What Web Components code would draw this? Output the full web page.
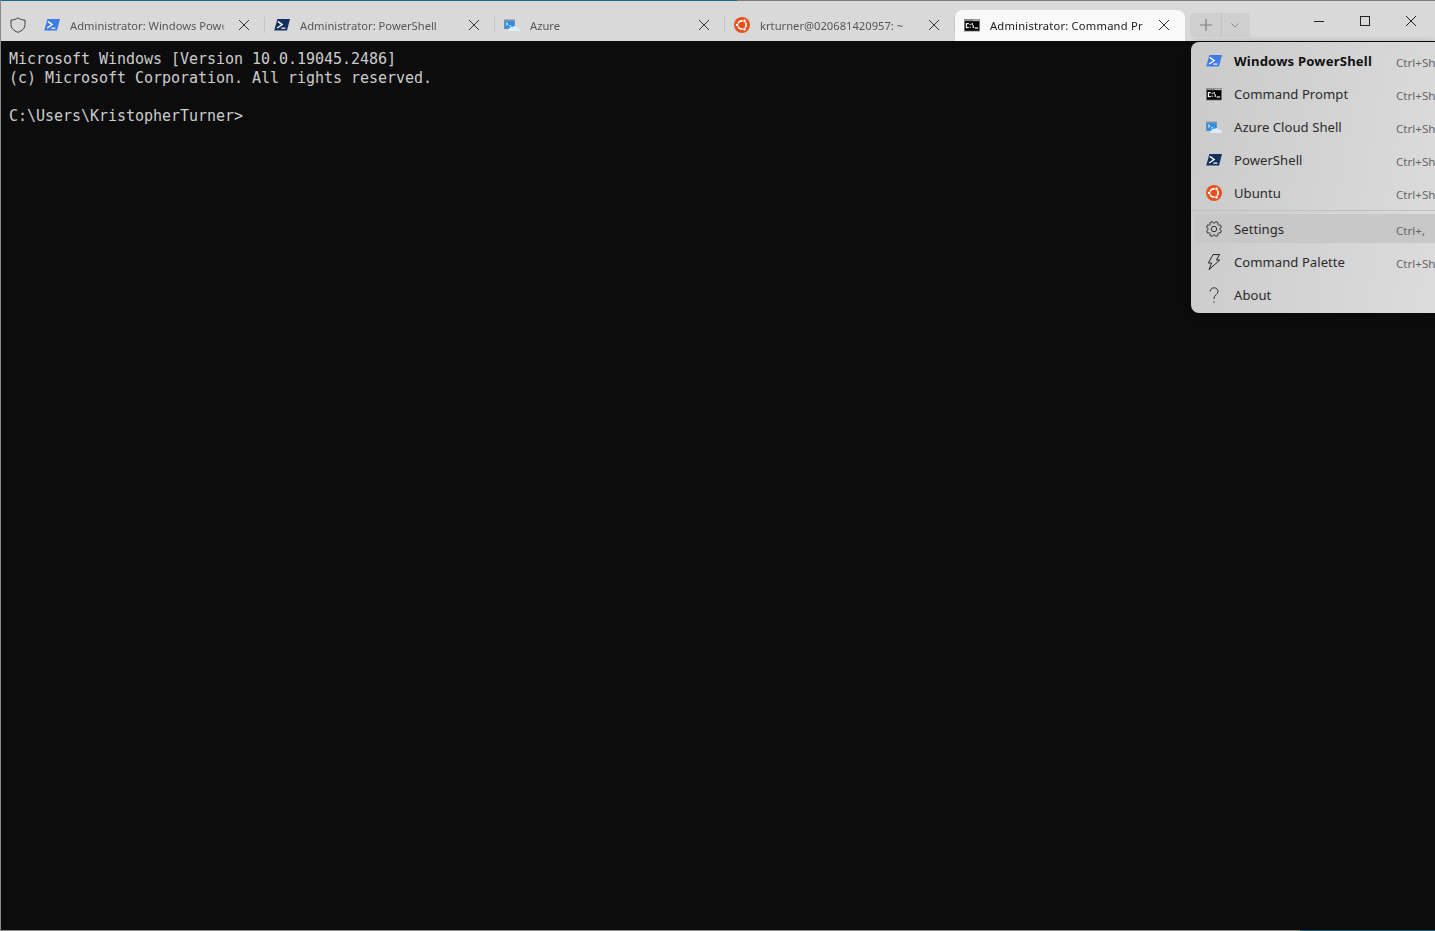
<!DOCTYPE html>
<html lang="en">
<head>
<meta charset="utf-8">
<title>Windows Terminal</title>
<style>
    html, body { margin: 0; height: 100%; overflow: hidden; background: #0c0c0c; }
</style>
</head>
<body>
<wt-window>
    <wt-tab-bar slot="tabs">
        <wt-tab icon="powershell" label="Administrator: Windows Powe"></wt-tab>
        <wt-tab icon="powershell-dark" label="Administrator: PowerShell"></wt-tab>
        <wt-tab icon="azure" label="Azure"></wt-tab>
        <wt-tab icon="ubuntu" label="krturner@020681420957: ~"></wt-tab>
        <wt-tab icon="cmd" label="Administrator: Command Pr" active></wt-tab>
    </wt-tab-bar>
    <wt-terminal slot="body">Microsoft Windows [Version 10.0.19045.2486]
(c) Microsoft Corporation. All rights reserved.

C:\Users\KristopherTurner&gt;</wt-terminal>
    <wt-menu slot="overlay">
        <wt-menu-item icon="powershell" keys="Ctrl+Sh" default>Windows PowerShell</wt-menu-item>
        <wt-menu-item icon="cmd" keys="Ctrl+Sh">Command Prompt</wt-menu-item>
        <wt-menu-item icon="azure" keys="Ctrl+Sh">Azure Cloud Shell</wt-menu-item>
        <wt-menu-item icon="powershell-dark" keys="Ctrl+Sh">PowerShell</wt-menu-item>
        <wt-menu-item icon="ubuntu" keys="Ctrl+Sh">Ubuntu</wt-menu-item>
        <wt-menu-sep></wt-menu-sep>
        <wt-menu-item icon="gear" keys="Ctrl+," hover>Settings</wt-menu-item>
        <wt-menu-item icon="bolt" keys="Ctrl+Sh">Command Palette</wt-menu-item>
        <wt-menu-item icon="help">About</wt-menu-item>
    </wt-menu>
</wt-window>

<script>
const UI_FONT = '"Noto Sans", "Open Sans", sans-serif';

// gear outline with 8 teeth, drawn around 8,8
function gearPath() {
    let d = '';
    for (let i = 0; i < 8; i++) {
        const a = i * Math.PI / 4 + Math.PI / 8;
        const pts = [[-0.30, 5.9], [-0.17, 7.6], [0.17, 7.6], [0.30, 5.9]];
        pts.forEach(([o, r], j) => {
            const x = 8 + r * Math.cos(a + o);
            const y = 8 + r * Math.sin(a + o);
            d += (i === 0 && j === 0 ? 'M' : 'L') + x.toFixed(2) + ' ' + y.toFixed(2);
        });
    }
    return d + 'Z';
}

const ICONS = {
    powershell: `<path d="M3.4 2H16l-3 11.6H0.2z" fill="#3f7ce6"/><path d="M3.8 4.4l4.4 3.2L3.2 11" fill="none" stroke="#fff" stroke-width="1.3"/><path d="M7.4 11.2h4" stroke="#fff" stroke-width="1.2"/>`,
    'powershell-dark': `<path d="M3.4 2H16l-3 11.6H0.2z" fill="#12315e"/><path d="M3.8 4.4l4.4 3.2L3.2 11" fill="none" stroke="#fff" stroke-width="1.3"/><path d="M7.4 11.2h4" stroke="#fff" stroke-width="1.2"/>`,
    cmd: `<rect x="0" y="2" width="16" height="12.5" fill="#8a8a8a"/><rect x="0.8" y="4.2" width="14.4" height="9.5" fill="#000"/><rect x="9.500" y="2.800" width="1.200" height="1" fill="#e8e8e8"/><rect x="11.500" y="2.800" width="1.200" height="1" fill="#e8e8e8"/><rect x="13.500" y="2.800" width="1.200" height="1" fill="#e8e8e8"/><g fill="#f4f4f4"><rect x="1.800" y="6" width="3" height="1.200"/><rect x="1.800" y="7" width="1.300" height="3.400"/><rect x="1.800" y="10" width="3" height="1.200"/><rect x="5.600" y="6.800" width="1.200" height="1.200"/><rect x="5.600" y="9.600" width="1.200" height="1.200"/><rect x="7.600" y="6" width="1.200" height="2.200"/><rect x="8.600" y="8.200" width="1.200" height="2.800"/><rect x="10.600" y="10.400" width="3.600" height="1.200"/></g>`,
    azure: `<rect x="0" y="2.500" width="11" height="9.500" fill="#7f93a6"/><rect x="0.700" y="4.400" width="9.600" height="7" fill="#2f8fe6"/><path d="M2 5.800l2 1.300-2 1.300" fill="none" stroke="#fff" stroke-width="0.900"/><path d="M5 8.800h2.400" stroke="#fff" stroke-width="0.800"/><path d="M5.600 14c-1.500 0-2-1.900-.4-2.300.3-1.400 1.900-2.200 3.400-1.800 1-1.500 3.600-1 3.800.800 1.800.1 3.600.7 3.600 2 0 .9-.7 1.300-1.800 1.300z" fill="#d8eefb"/>`,
    ubuntu: `<circle cx="8" cy="8" r="8" fill="#e4531f"/><circle cx="8" cy="8" r="4.100" fill="none" stroke="#fff" stroke-width="1.700"/><g fill="#fff" stroke="#e4531f" stroke-width="0.800"><circle cx="3.100" cy="8" r="1.700"/><circle cx="10.500" cy="3.700" r="1.700"/><circle cx="10.500" cy="12.300" r="1.700"/></g>`,
    gear: `<path d="${gearPath()}" fill="none" stroke="#333" stroke-width="1"/><circle cx="8" cy="8" r="2.700" fill="none" stroke="#333" stroke-width="1"/>`,
    bolt: `<path d="M7 0.600h6.600L10.400 6h3.400L3 15.600 5.600 9H2.400z" fill="none" stroke="#222" stroke-width="1" stroke-linejoin="round"/>`,
    help: `<path d="M4 4.600C4.200 2.200 6 .8 8 .8c2.300 0 4 1.500 4 3.500 0 3.200-4 3.600-4 7v.8" fill="none" stroke="#333" stroke-width="1"/><circle cx="8" cy="15" r="0.700" fill="#333"/>`,
    shield: `<path d="M8 0.800c1.900 1.500 4.300 2.200 7 2.300v4.400c0 3.600-2.600 6.300-7 7.800-4.400-1.500-7-4.200-7-7.800V3.100C3.700 3 6.100 2.300 8 0.800z" fill="none" stroke="#3c3c3c" stroke-width="1"/>`,
    close: `<path d="M3 3l10 10M13 3L3 13" fill="none" stroke="#333" stroke-width="1"/>`
};

function iconSvg(name, size = 16) {
    return `<svg width="${size}" height="${size}" viewBox="0 0 16 16" aria-hidden="true">${ICONS[name] || ''}</svg>`;
}

const windowTmp = document.createElement('template');
windowTmp.innerHTML = `
    <style>
        :host {
            position: relative;
            display: flex;
            flex-direction: column;
            box-sizing: border-box;
            width: 100%;
            height: 100vh;
            overflow: hidden;
            border-left: 1px solid #8a8a8a;
            font-family: ${UI_FONT};
        }
        .edge-top { height: 1px; flex: none; background: linear-gradient(to right, #1b6a8c 736px, #7d7d7d 736px); }
        .edge-bottom { height: 1px; flex: none; background: linear-gradient(to right, #8a8a8a 1299px, #0f5f82 1299px); }
        .body { flex: 1; min-height: 0; display: flex; }
    </style>
    <div class="edge-top"></div>
    <slot name="tabs"></slot>
    <div class="body"><slot name="body"></slot></div>
    <div class="edge-bottom"></div>
    <slot name="overlay"></slot>
`;
customElements.define('wt-window', class WtWindow extends HTMLElement {
    constructor() {
        super();
        this.attachShadow({mode: 'open'});
        this.shadowRoot.appendChild(windowTmp.content.cloneNode(true));
    }
});

const barTmp = document.createElement('template');
barTmp.innerHTML = `
    <style>
        :host {
            display: flex;
            flex: none;
            height: 40px;
            background: #d9d9d9;
        }
        .shield { width: 34px; flex: none; display: flex; justify-content: center; padding: 16px 1px 0 0; box-sizing: border-box; }
        .tabs { display: flex; flex: none; align-items: flex-end; }
        .new-tab {
            flex: none;
            display: flex;
            height: 24px;
            margin: 12px 0 0 5px;
            background: #cfcfcf;
            border-radius: 4px 0 0 4px;
        }
        .new-tab div { display: flex; align-items: center; justify-content: center; }
        .plus { width: 31px; border-right: 1px solid #c2c2c2; }
        .chev { width: 26px; padding-right: 2px; }
        .spacer { flex: 1; }
        .caption { display: flex; flex: none; align-items: flex-start; padding-right: 1px; }
        .caption div { width: 46px; height: 40px; display: flex; justify-content: center; padding-top: 12px; box-sizing: border-box; }
    </style>
    <div class="shield">${iconSvg('shield')}</div>
    <div class="tabs"><slot></slot></div>
    <div class="new-tab">
        <div class="plus"><svg width="14" height="14" viewBox="0 0 14 14"><path d="M7 1v12M1 7h12" stroke="#7d7d7d" stroke-width="1.2"/></svg></div>
        <div class="chev"><svg width="10" height="10" viewBox="0 0 10 10"><path d="M1.5 3.5L5 7l3.5-3.5" fill="none" stroke="#8a8a8a" stroke-width="1"/></svg></div>
    </div>
    <div class="spacer"></div>
    <div class="caption">
        <div><svg width="12" height="16" viewBox="0 0 12 16"><path d="M1 8.500h10" stroke="#222" stroke-width="1"/></svg></div>
        <div><svg width="12" height="16" viewBox="0 0 12 16"><rect x="1.500" y="3.500" width="9" height="9" fill="none" stroke="#222" stroke-width="1"/></svg></div>
        <div><svg width="12" height="16" viewBox="0 0 12 16"><path d="M1 3l10 10M11 3L1 13" fill="none" stroke="#222" stroke-width="1"/></svg></div>
    </div>
`;
customElements.define('wt-tab-bar', class WtTabBar extends HTMLElement {
    constructor() {
        super();
        this.attachShadow({mode: 'open'});
        this.shadowRoot.appendChild(barTmp.content.cloneNode(true));
    }
});

customElements.define('wt-tab', class WtTab extends HTMLElement {
    constructor() {
        super();
        this.attachShadow({mode: 'open'});
    }

    connectedCallback() {
        this.shadowRoot.innerHTML = `
            <style>
                :host {
                    position: relative;
                    display: flex;
                    align-items: center;
                    box-sizing: border-box;
                    width: 230px;
                    height: 31px;
                    padding: 0 0 1px 9px;
                    color: #565656;
                    font-size: 11.2px;
                }
                :host([active]) {
                    background: #f9f9f9;
                    border-radius: 8px 8px 0 0;
                    color: #1a1a1a;
                    letter-spacing: .2px;
                }
                :host(:not([active]))::after {
                    content: '';
                    position: absolute;
                    right: 0;
                    top: 7px;
                    height: 16px;
                    border-right: 1px solid #c6c6c6;
                }
                .icon { width: 16px; height: 16px; flex: none; margin-right: 10px; }
                /* long titles fade out before the close button */
                .label {
                    width: 155px;
                    flex: none;
                    white-space: nowrap;
                    -webkit-mask-image: linear-gradient(to right, #000 152px, transparent 155px);
                    mask-image: linear-gradient(to right, #000 152px, transparent 155px);
                }
                .close { width: 16px; height: 16px; margin-left: 11px; flex: none; display: flex; }
            </style>
            <div class="icon">${iconSvg(this.getAttribute('icon'))}</div>
            <div class="label">${this.getAttribute('label')}</div>
            <div class="close">${iconSvg('close')}</div>
        `;
    }
});

const termTmp = document.createElement('template');
termTmp.innerHTML = `
    <style>
        :host {
            display: block;
            flex: 1;
            background: #0c0c0c;
            color: #cccccc;
            font: 15px/19px "DejaVu Sans Mono", monospace;
            letter-spacing: -0.03px;
            padding: 9px 8px;
        }
        .screen { white-space: pre; }
    </style>
    <div class="screen"><slot></slot></div>
`;
customElements.define('wt-terminal', class WtTerminal extends HTMLElement {
    constructor() {
        super();
        this.attachShadow({mode: 'open'});
        this.shadowRoot.appendChild(termTmp.content.cloneNode(true));
    }
});

const menuTmp = document.createElement('template');
menuTmp.innerHTML = `
    <style>
        :host {
            position: absolute;
            top: 42px;
            right: 0;
            width: 244px;
            display: block;
            box-sizing: border-box;
            padding: 2px 0;
            overflow: hidden;
            border-radius: 8px 0 0 8px;
            background: linear-gradient(100deg, #cacaca 0%, #d4d4d4 55%, #dcdcdc 100%);
            box-shadow: 0 2px 8px rgba(0,0,0,.4);
        }
    </style>
    <slot></slot>
`;
customElements.define('wt-menu', class WtMenu extends HTMLElement {
    constructor() {
        super();
        this.attachShadow({mode: 'open'});
        this.shadowRoot.appendChild(menuTmp.content.cloneNode(true));
    }
});

customElements.define('wt-menu-sep', class WtMenuSep extends HTMLElement {
    constructor() {
        super();
        this.attachShadow({mode: 'open'});
        this.shadowRoot.innerHTML = `
            <style>
                :host { display: block; height: 3px; box-sizing: border-box; padding-top: 1px; }
                div { height: 1px; background: #c0c0c0; }
            </style>
            <div></div>
        `;
    }
});

customElements.define('wt-menu-item', class WtMenuItem extends HTMLElement {
    constructor() {
        super();
        this.attachShadow({mode: 'open'});
    }

    connectedCallback() {
        const keys = this.getAttribute('keys') || '';
        this.shadowRoot.innerHTML = `
            <style>
                :host {
                    display: block;
                    padding: 2px 0 2px 4px;
                    color: #2b2b2b;
                    font-size: 13.1px;
                    letter-spacing: .04px;
                    white-space: nowrap;
                }
                :host([default]) { font-weight: 700; color: #111; letter-spacing: .18px; }
                .row {
                    display: flex;
                    align-items: center;
                    box-sizing: border-box;
                    height: 29px;
                    padding-left: 11px;
                    border-radius: 4px 0 0 4px;
                }
                :host([hover]) .row { background: #c8c8c8; }
                .icon { width: 16px; height: 16px; flex: none; margin: 0 12px 0 0; }
                .text { width: 162px; flex: none; }
                .keys { color: #666; font-size: 11.6px; font-weight: 400; letter-spacing: 0; padding-top: 4px; }
            </style>
            <div class="row">
                <div class="icon">${iconSvg(this.getAttribute('icon'))}</div>
                <div class="text"><slot></slot></div>
                <div class="keys">${keys}</div>
            </div>
        `;
    }
});
</script>
</body>
</html>
